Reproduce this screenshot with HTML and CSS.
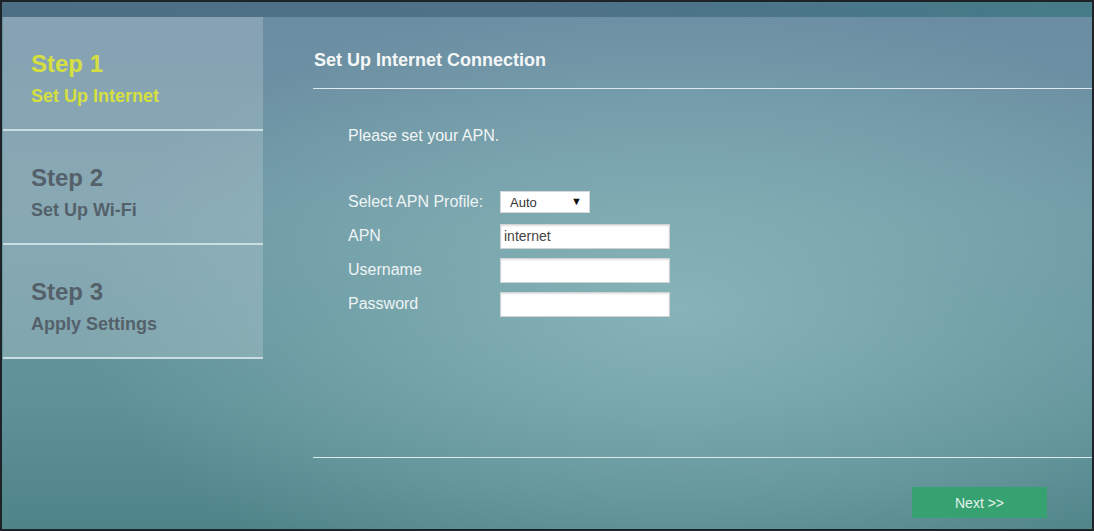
FILE: index.html
```html
<!DOCTYPE html>
<html lang="en">
<head>
    <meta charset="UTF-8">
    <meta name="viewport" content="width=device-width, initial-scale=1.0">
    <title>Quick Setup</title>
    <link rel="stylesheet" href="styles.css">
</head>
<body>
    <div class="frame">
        <div class="topbar"></div>
        <div class="layout">
            <div class="sidebar">
                <div class="step active">
                    <div class="step-num">Step 1</div>
                    <div class="step-name">Set Up Internet</div>
                </div>
                <div class="step">
                    <div class="step-num">Step 2</div>
                    <div class="step-name">Set Up Wi-Fi</div>
                </div>
                <div class="step">
                    <div class="step-num">Step 3</div>
                    <div class="step-name">Apply Settings</div>
                </div>
            </div>

            <div class="main">
                <h1 class="title">Set Up Internet Connection</h1>
                <div class="content">
                    <p class="intro">Please set your APN.</p>
                    <form class="apn-form">
                        <div class="row">
                            <label for="profile">Select APN Profile:</label>
                            <span class="select-wrap">
                                <select id="profile" name="profile">
                                    <option>Auto</option>
                                    <option>Manual</option>
                                </select>
                            </span>
                        </div>
                        <div class="row">
                            <label for="apn">APN</label>
                            <input type="text" id="apn" name="apn" value="internet">
                        </div>
                        <div class="row">
                            <label for="username">Username</label>
                            <input type="text" id="username" name="username">
                        </div>
                        <div class="row">
                            <label for="password">Password</label>
                            <input type="password" id="password" name="password">
                        </div>
                    </form>
                </div>
                <div class="footer">
                    <button type="button" class="next-btn">Next &gt;&gt;</button>
                </div>
            </div>
        </div>
    </div>
</body>
</html>
```

FILE: styles.css
```css
html, body {
    margin: 0;
    height: 100%;
}

body {
    font-family: "Liberation Sans", Arial, sans-serif;
}

.frame {
    box-sizing: border-box;
    height: 531px;
    border: 2px solid #1d2326;
    display: flex;
    flex-direction: column;
    background:
        radial-gradient(ellipse 55% 60% at 62% 58%, rgba(140, 185, 188, 0.85) 0%, rgba(140, 185, 188, 0) 100%),
        linear-gradient(180deg, #6b8ca2 0%, #6d97a4 40%, #5f9198 75%, #4f8489 100%);
}

.topbar {
    height: 15px;
    background: linear-gradient(90deg, #4d6f86 0%, #4f7288 50%, #457c88 100%);
}

.layout {
    flex: 1;
    display: flex;
}

/* left steps */
.sidebar {
    width: 260px;
    margin-left: 1px;
}

.step {
    height: 112px;
    box-sizing: content-box;
    padding-left: 28px;
    border-bottom: 2px solid #cadde2;
    background: rgba(200, 212, 218, 0.3);
    color: #54616a;
}

.step-num {
    padding-top: 33px;
    font-size: 24px;
    line-height: 28px;
    font-weight: bold;
}

.step-name {
    margin-top: 6px;
    font-size: 18px;
    line-height: 24px;
    font-weight: bold;
}

.step.active {
    color: #d5e040;
}

/* right panel */
.main {
    flex: 1;
    display: flex;
    flex-direction: column;
    padding-left: 50px;
}

.title {
    margin: 0;
    padding: 32px 0 17px 1px;
    font-size: 18px;
    line-height: 22px;
    color: #f4f7f7;
    border-bottom: 1px solid #dce9ee;
}

.content {
    padding-left: 35px;
}

.intro {
    margin: 37px 0 39px;
    font-size: 16px;
    line-height: 20px;
    color: #f2f5f5;
}

.row {
    height: 34px;
    display: flex;
    align-items: center;
}

.row label {
    width: 152px;
    font-size: 16px;
    line-height: 20px;
    color: #eef3f4;
}

.row input {
    box-sizing: border-box;
    width: 170px;
    height: 25px;
    margin: 0;
    padding: 0 3px;
    border: 1px solid #cfd3d4;
    box-shadow: inset 0 1px 2px rgba(0, 0, 0, 0.12);
    background: #ffffff;
    font-family: "Liberation Sans", Arial, sans-serif;
    font-size: 14px;
    color: #444;
}

.select-wrap {
    position: relative;
    display: inline-block;
}

.select-wrap select {
    -webkit-appearance: none;
    appearance: none;
    box-sizing: border-box;
    width: 90px;
    height: 22px;
    margin: 0;
    padding: 0 0 0 9px;
    border: 1px solid #d4d8d9;
    border-radius: 0;
    background: #ffffff;
    font-family: "Liberation Sans", Arial, sans-serif;
    font-size: 13px;
    color: #333;
}

.select-wrap::after {
    content: "\25BC";
    position: absolute;
    right: 8px;
    top: 4px;
    font-size: 11px;
    color: #111;
    pointer-events: none;
}

.footer {
    margin-top: auto;
    border-top: 1px solid #dbeaec;
    padding: 29px 45px 11px 0;
    display: flex;
    justify-content: flex-end;
}

.next-btn {
    width: 135px;
    height: 31px;
    border: none;
    background-color: #37a271;
    color: #e4f4ec;
    font-family: "Liberation Sans", Arial, sans-serif;
    font-size: 14px;
    cursor: pointer;
}

.next-btn:hover {
    background-color: #2f8f63;
}
```
